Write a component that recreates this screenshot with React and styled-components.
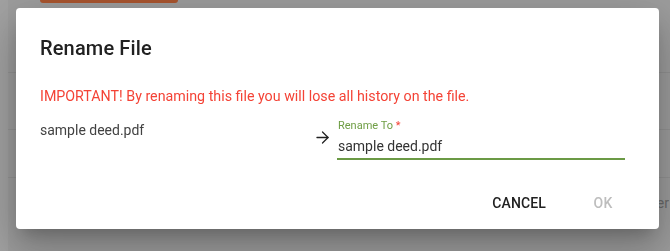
import React from "react";
import styled, { createGlobalStyle } from "styled-components";
import { ArrowRight } from "lucide-react";

const GlobalStyle = createGlobalStyle`
  html, body {
    margin: 0;
    padding: 0;
    background: #9d9d9d;
    font-family: Roboto, "Liberation Sans", Arial, sans-serif;
    overflow: hidden;
  }
`;

const Page = styled.div`
  width: 670px;
  height: 251px;
  display: flex;
  background: #9d9d9d;
`;

const SideStrip = styled.div`
  width: 8px;
  background: #a2a2a2;
`;

const PageMain = styled.div`
  flex: 1;
  display: flex;
  flex-direction: column;
`;

const TopBar = styled.div`
  height: 72px;
  padding-left: 32px;
  border-bottom: 1px solid #929292;
`;

const OrangeButton = styled.div`
  width: 138px;
  height: 3px;
  background: #a9552f;
  border-radius: 0 0 4px 4px;
`;

const ListRow = styled.div`
  height: ${({ $h }) => $h}px;
  border-bottom: ${({ $last }) => ($last ? "none" : "1px solid #939393")};
  display: flex;
  align-items: center;
  justify-content: flex-end;
  padding-right: 1px;
  color: #6a6a6a;
  font-size: 14px;
`;

const Backdrop = styled.div`
  position: fixed;
  inset: 0;
  pointer-events: none;
`;

const Dialog = styled.div`
  position: absolute;
  left: 16px;
  top: 8px;
  width: 643px;
  height: 221px;
  background: #fff;
  border-radius: 4px;
  box-shadow: 0 11px 15px -7px rgba(0, 0, 0, 0.2),
    0 24px 38px 3px rgba(0, 0, 0, 0.14), 0 9px 46px 8px rgba(0, 0, 0, 0.12);
  display: flex;
  flex-direction: column;
`;

const Title = styled.h2`
  margin: 0;
  padding: 24px 24px 20px;
  font-size: 20px;
  font-weight: 500;
  line-height: 32px;
  color: #212121;
  letter-spacing: 0.0075em;
`;

const Content = styled.div`
  padding: 0 24px;
  flex: 1;
`;

const Warning = styled.p`
  margin: 0;
  font-size: 14.25px;
  line-height: 24px;
  color: #f44336;
`;

const RenameRow = styled.div`
  display: flex;
  margin-top: 8px;
`;

const OldName = styled.div`
  width: 273px;
  padding-top: 4px;
  font-size: 14px;
  line-height: 20px;
  color: #424242;
`;

const ArrowWrap = styled.div`
  width: 24px;
  padding-top: 12px;
  color: #212121;
  line-height: 0;
`;

const Field = styled.div`
  width: 288px;
  display: flex;
  flex-direction: column;
`;

const Label = styled.label`
  margin-top: 3px;
  font-size: 11px;
  line-height: 14px;
  color: #6f9e45;
  padding-left: 1px;
`;

const Req = styled.span`
  color: #f44336;
`;

const Input = styled.div`
  font-size: 14px;
  line-height: 20px;
  padding: 3px 1px 2px;
  color: #333;
  border-bottom: 2px solid #6b9a45;
`;

const Actions = styled.div`
  display: flex;
  justify-content: flex-end;
  gap: 17px;
  padding: 0 24px 8px;
`;

const Button = styled.button`
  min-width: 64px;
  height: 36px;
  padding: 6px 8px;
  border: none;
  background: transparent;
  font-family: Roboto, "Liberation Sans", Arial, sans-serif;
  font-size: 14px;
  font-weight: 500;
  letter-spacing: 0.01em;
  text-transform: uppercase;
  color: ${({ disabled }) => (disabled ? "#bdbdbd" : "#212121")};
`;

export default function App() {
  return (
    <>
      <GlobalStyle />
      <Page>
        <SideStrip />
        <PageMain>
          <TopBar>
            <OrangeButton />
          </TopBar>
          <ListRow $h={56} />
          <ListRow $h={47} />
          <ListRow $h={50} $last>
            er
          </ListRow>
        </PageMain>
      </Page>
      <Backdrop>
        <Dialog>
          <Title>Rename File</Title>
          <Content>
            <Warning>
              IMPORTANT! By renaming this file you will lose all history on the
              file.
            </Warning>
            <RenameRow>
              <OldName>sample deed.pdf</OldName>
              <ArrowWrap>
                <ArrowRight size={19} strokeWidth={1.6} />
              </ArrowWrap>
              <Field>
                <Label>
                  Rename To <Req>*</Req>
                </Label>
                <Input>sample deed.pdf</Input>
              </Field>
            </RenameRow>
          </Content>
          <Actions>
            <Button>Cancel</Button>
            <Button disabled>OK</Button>
          </Actions>
        </Dialog>
      </Backdrop>
    </>
  );
}
